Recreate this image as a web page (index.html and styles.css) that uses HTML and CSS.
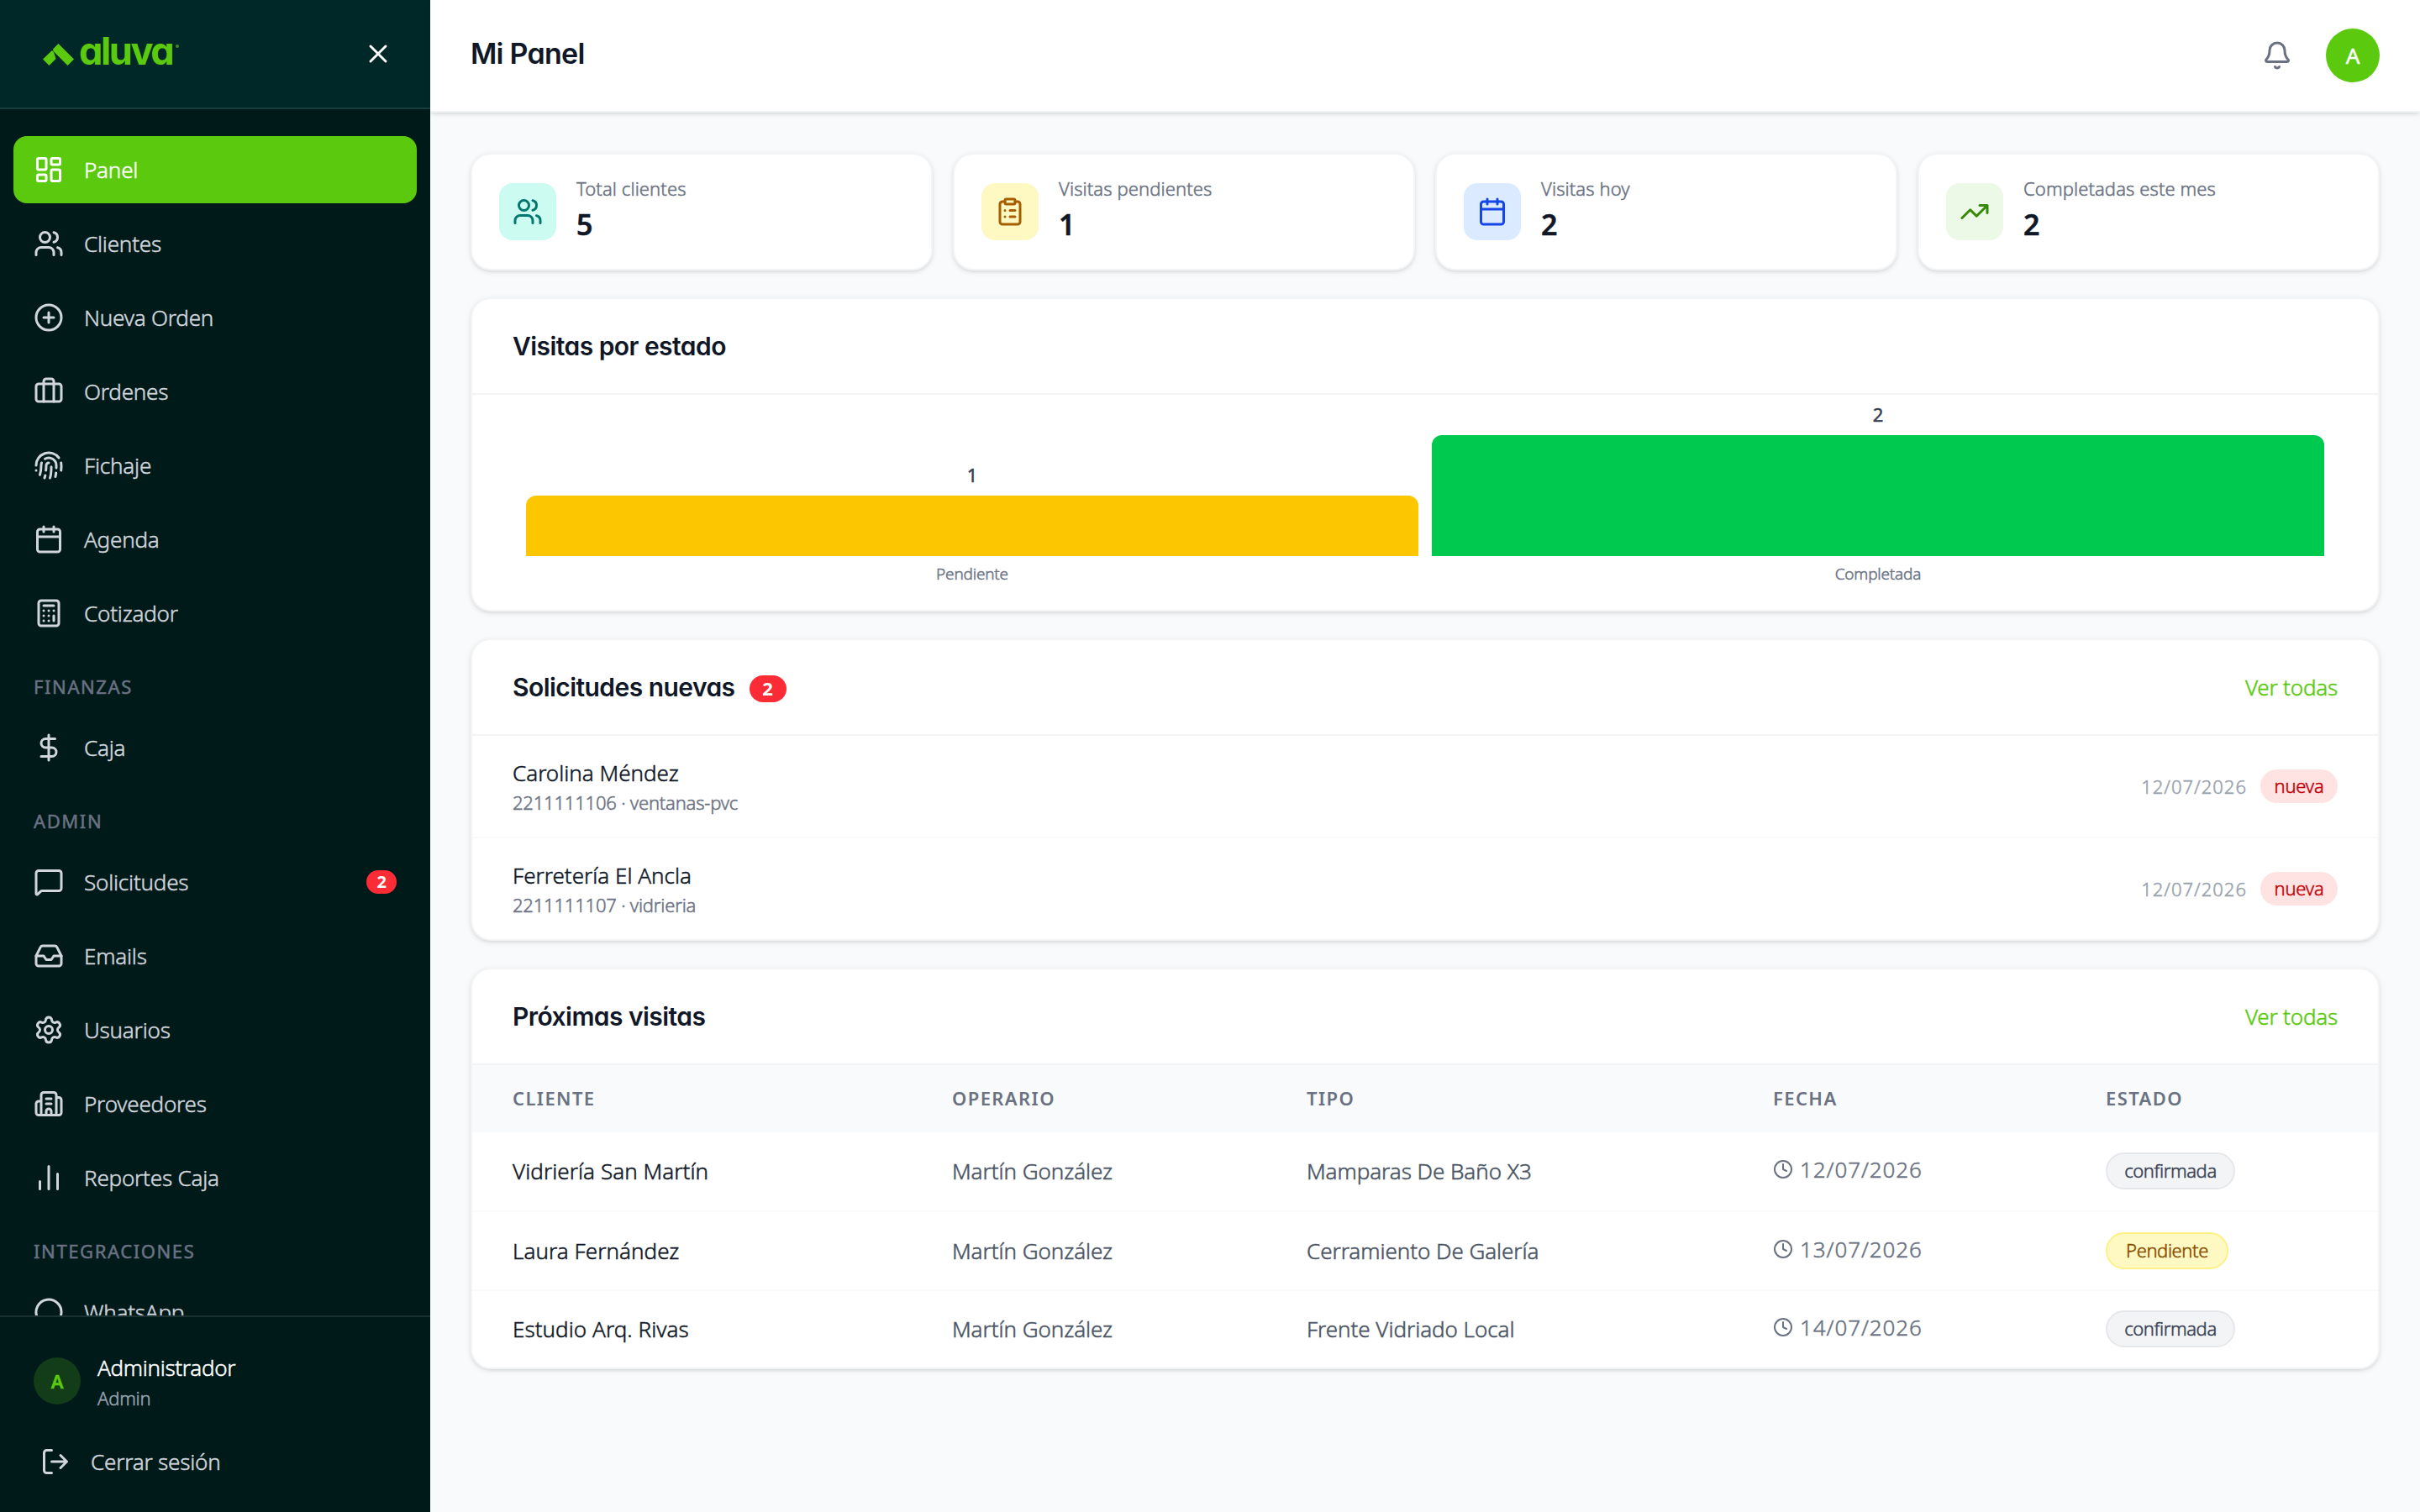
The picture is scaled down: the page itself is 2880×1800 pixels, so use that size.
FILE: index.html
```
<!DOCTYPE html>
<html lang="es">

<head>
  <meta charset="UTF-8">
  <title>Mi Panel</title>
  <link rel="stylesheet" href="styles.css">
</head>

<body>
  <div class="layout">
    <aside class="sidebar">
      <div class="sidebar-header">
        <div class="logo">
          <svg class="logo-mark" viewBox="0 0 37 26">
            <path d="M18.500 0 37 18.500 29.500 26 12.500 9 12 6.500Z" />
            <path d="M11 8 13 10 15.500 18 7.500 26 0 18.500Z" />
          </svg>
          <span class="logo-text">aluva</span>
          <span class="logo-dot"></span>
        </div>
        <svg class="icon" viewBox="0 0 24 24"><path d="M18 6 6 18M6 6l12 12" /></svg>
      </div>

      <nav class="nav">
        <a class="nav-item active">
          <svg class="icon" viewBox="0 0 24 24"><rect width="7" height="9" x="3" y="3" rx="1" /><rect width="7" height="5" x="14" y="3" rx="1" /><rect width="7" height="9" x="14" y="12" rx="1" /><rect width="7" height="5" x="3" y="16" rx="1" /></svg>
          <span>Panel</span>
        </a>
        <a class="nav-item">
          <svg class="icon" viewBox="0 0 24 24"><path d="M16 21v-2a4 4 0 0 0-4-4H6a4 4 0 0 0-4 4v2M16 3.128a4 4 0 0 1 0 7.744M22 21v-2a4 4 0 0 0-3-3.870" /><circle cx="9" cy="7" r="4" /></svg>
          <span>Clientes</span>
        </a>
        <a class="nav-item">
          <svg class="icon" viewBox="0 0 24 24"><circle cx="12" cy="12" r="10" /><path d="M8 12h8M12 8v8" /></svg>
          <span>Nueva Orden</span>
        </a>
        <a class="nav-item">
          <svg class="icon" viewBox="0 0 24 24"><path d="M16 20V4a2 2 0 0 0-2-2h-4a2 2 0 0 0-2 2v16" /><rect width="20" height="14" x="2" y="6" rx="2" /></svg>
          <span>Ordenes</span>
        </a>
        <a class="nav-item">
          <svg class="icon" viewBox="0 0 24 24"><path d="M12 10a2 2 0 0 0-2 2c0 1.020-.1 2.510-.26 4M14 13.120c0 2.380 0 6.380-1 8.880M17.290 21.020c.12-.6.43-2.300.5-3.020M2 12a10 10 0 0 1 18-6M2 16h.01M21.800 16c.2-2 .131-5.354 0-6M5 19.500C5.500 18 6 15 6 12a6 6 0 0 1 .34-2M8.650 22c.21-.66.45-1.320.57-2M9 6.800a6 6 0 0 1 9 5.200v2" /></svg>
          <span>Fichaje</span>
        </a>
        <a class="nav-item">
          <svg class="icon" viewBox="0 0 24 24"><path d="M8 2v4M16 2v4M3 10h18" /><rect width="18" height="18" x="3" y="4" rx="2" /></svg>
          <span>Agenda</span>
        </a>
        <a class="nav-item">
          <svg class="icon" viewBox="0 0 24 24"><rect width="16" height="20" x="4" y="2" rx="2" /><path d="M8 6h8M16 14v4M16 10h.01M12 10h.01M8 10h.01M12 14h.01M8 14h.01M12 18h.01M8 18h.01" /></svg>
          <span>Cotizador</span>
        </a>

        <div class="nav-title">FINANZAS</div>
        <a class="nav-item">
          <svg class="icon" viewBox="0 0 24 24"><path d="M12 2v20M17 5H9.500a3.500 3.500 0 0 0 0 7h5a3.500 3.500 0 0 1 0 7H6" /></svg>
          <span>Caja</span>
        </a>

        <div class="nav-title">ADMIN</div>
        <a class="nav-item">
          <svg class="icon" viewBox="0 0 24 24"><path d="M22 17a2 2 0 0 1-2 2H6.828a2 2 0 0 0-1.414.586l-2.202 2.202A.71.71 0 0 1 2 21.286V5a2 2 0 0 1 2-2h16a2 2 0 0 1 2 2z" /></svg>
          <span>Solicitudes</span>
          <b class="nav-badge">2</b>
        </a>
        <a class="nav-item">
          <svg class="icon" viewBox="0 0 24 24"><path d="M22 12h-6l-2 3h-4l-2-3H2" /><path d="M5.450 5.110 2 12v6a2 2 0 0 0 2 2h16a2 2 0 0 0 2-2v-6l-3.450-6.890A2 2 0 0 0 16.760 4H7.240a2 2 0 0 0-1.790 1.110z" /></svg>
          <span>Emails</span>
        </a>
        <a class="nav-item">
          <svg class="icon" viewBox="0 0 24 24"><path d="M9.671 4.136a2.340 2.340 0 0 1 4.659 0 2.340 2.340 0 0 0 3.319 1.915 2.340 2.340 0 0 1 2.330 4.033 2.340 2.340 0 0 0 0 3.831 2.340 2.340 0 0 1-2.330 4.033 2.340 2.340 0 0 0-3.319 1.915 2.340 2.340 0 0 1-4.659 0 2.340 2.340 0 0 0-3.320-1.915 2.340 2.340 0 0 1-2.330-4.033 2.340 2.340 0 0 0 0-3.831A2.340 2.340 0 0 1 6.350 6.051a2.340 2.340 0 0 0 3.319-1.915" /><circle cx="12" cy="12" r="3" /></svg>
          <span>Usuarios</span>
        </a>
        <a class="nav-item">
          <svg class="icon" viewBox="0 0 24 24"><path d="M10 12h4M10 8h4M14 21v-3a2 2 0 0 0-4 0v3M6 10H4a2 2 0 0 0-2 2v7a2 2 0 0 0 2 2h16a2 2 0 0 0 2-2V9a2 2 0 0 0-2-2h-2M6 21V5a2 2 0 0 1 2-2h8a2 2 0 0 1 2 2v16" /></svg>
          <span>Proveedores</span>
        </a>
        <a class="nav-item">
          <svg class="icon" viewBox="0 0 24 24"><path d="M5 21v-6M12 21V3M19 21V9" /></svg>
          <span>Reportes Caja</span>
        </a>

        <div class="nav-title">INTEGRACIONES</div>
        <a class="nav-item">
          <svg class="icon" viewBox="0 0 24 24"><path d="M2.992 16.342a2 2 0 0 1 .094 1.167l-1.065 3.290a1 1 0 0 0 1.236 1.168l3.413-.998a2 2 0 0 1 1.099.092 10 10 0 1 0-4.777-4.719" /></svg>
          <span>WhatsApp</span>
        </a>
      </nav>

      <div class="sidebar-footer">
        <div class="user">
          <div class="user-avatar">A</div>
          <div>
            <div class="user-name">Administrador</div>
            <div class="user-role">Admin</div>
          </div>
        </div>
        <a class="logout">
          <svg class="icon" viewBox="0 0 24 24"><path d="m16 17 5-5-5-5M21 12H9M9 21H5a2 2 0 0 1-2-2V5a2 2 0 0 1 2-2h4" /></svg>
          <span>Cerrar sesión</span>
        </a>
      </div>
    </aside>

    <div class="main">
      <header class="topbar">
        <h1>Mi Panel</h1>
        <div class="topbar-actions">
          <svg class="icon bell" viewBox="0 0 24 24"><path d="M10.268 21a2 2 0 0 0 3.464 0M3.262 15.326A1 1 0 0 0 4 17h16a1 1 0 0 0 .74-1.673C19.410 13.956 18 12.499 18 8A6 6 0 0 0 6 8c0 4.499-1.411 5.956-2.738 7.326" /></svg>
          <div class="avatar">A</div>
        </div>
      </header>

      <div class="content">
        <div class="stats">
          <div class="card stat">
            <div class="stat-icon teal">
              <svg class="icon" viewBox="0 0 24 24"><path d="M16 21v-2a4 4 0 0 0-4-4H6a4 4 0 0 0-4 4v2M16 3.128a4 4 0 0 1 0 7.744M22 21v-2a4 4 0 0 0-3-3.870" /><circle cx="9" cy="7" r="4" /></svg>
            </div>
            <div>
              <div class="stat-label">Total clientes</div>
              <div class="stat-value">5</div>
            </div>
          </div>
          <div class="card stat">
            <div class="stat-icon yellow">
              <svg class="icon" viewBox="0 0 24 24"><rect width="8" height="4" x="8" y="2" rx="1" /><path d="M16 4h2a2 2 0 0 1 2 2v14a2 2 0 0 1-2 2H6a2 2 0 0 1-2-2V6a2 2 0 0 1 2-2h2M12 11h4M12 16h4M8 11h.01M8 16h.01" /></svg>
            </div>
            <div>
              <div class="stat-label">Visitas pendientes</div>
              <div class="stat-value">1</div>
            </div>
          </div>
          <div class="card stat">
            <div class="stat-icon blue">
              <svg class="icon" viewBox="0 0 24 24"><path d="M8 2v4M16 2v4M3 10h18" /><rect width="18" height="18" x="3" y="4" rx="2" /></svg>
            </div>
            <div>
              <div class="stat-label">Visitas hoy</div>
              <div class="stat-value">2</div>
            </div>
          </div>
          <div class="card stat">
            <div class="stat-icon green">
              <svg class="icon" viewBox="0 0 24 24"><path d="M16 7h6v6M22 7l-8.500 8.500-5-5L2 17" /></svg>
            </div>
            <div>
              <div class="stat-label">Completadas este mes</div>
              <div class="stat-value">2</div>
            </div>
          </div>
        </div>

        <section class="card">
          <div class="card-header">
            <h2>Visitas por estado</h2>
          </div>
          <div class="chart">
            <div class="chart-col">
              <div class="chart-value">1</div>
              <div class="chart-bar pendiente" style="height: 72px"></div>
              <div class="chart-label">Pendiente</div>
            </div>
            <div class="chart-col">
              <div class="chart-value">2</div>
              <div class="chart-bar completada" style="height: 144px"></div>
              <div class="chart-label">Completada</div>
            </div>
          </div>
        </section>

        <section class="card">
          <div class="card-header">
            <h2>Solicitudes nuevas</h2>
            <b class="count">2</b>
            <a class="link">Ver todas</a>
          </div>
          <div class="request">
            <div>
              <div class="request-name">Carolina Méndez</div>
              <div class="request-info">2211111106 · ventanas-pvc</div>
            </div>
            <div class="request-meta">
              <span class="request-date">12/07/2026</span>
              <span class="tag-new">nueva</span>
            </div>
          </div>
          <div class="request">
            <div>
              <div class="request-name">Ferretería El Ancla</div>
              <div class="request-info">2211111107 · vidrieria</div>
            </div>
            <div class="request-meta">
              <span class="request-date">12/07/2026</span>
              <span class="tag-new">nueva</span>
            </div>
          </div>
        </section>

        <section class="card">
          <div class="card-header">
            <h2>Próximas visitas</h2>
            <a class="link">Ver todas</a>
          </div>
          <table class="visits">
            <colgroup>
              <col class="col-cliente">
              <col class="col-operario">
              <col class="col-tipo">
              <col class="col-fecha">
              <col>
            </colgroup>
            <thead>
              <tr>
                <th>CLIENTE</th>
                <th>OPERARIO</th>
                <th>TIPO</th>
                <th>FECHA</th>
                <th>ESTADO</th>
              </tr>
            </thead>
            <tbody>
              <tr>
                <td class="client">Vidriería San Martín</td>
                <td>Martín González</td>
                <td>Mamparas De Baño X3</td>
                <td><div class="date"><svg class="icon" viewBox="0 0 24 24"><circle cx="12" cy="12" r="10" /><path d="M12 6v6l4 2" /></svg>12/07/2026</div></td>
                <td><span class="status">confirmada</span></td>
              </tr>
              <tr>
                <td class="client">Laura Fernández</td>
                <td>Martín González</td>
                <td>Cerramiento De Galería</td>
                <td><div class="date"><svg class="icon" viewBox="0 0 24 24"><circle cx="12" cy="12" r="10" /><path d="M12 6v6l4 2" /></svg>13/07/2026</div></td>
                <td><span class="status status-pending">Pendiente</span></td>
              </tr>
              <tr>
                <td class="client">Estudio Arq. Rivas</td>
                <td>Martín González</td>
                <td>Frente Vidriado Local</td>
                <td><div class="date"><svg class="icon" viewBox="0 0 24 24"><circle cx="12" cy="12" r="10" /><path d="M12 6v6l4 2" /></svg>14/07/2026</div></td>
                <td><span class="status">confirmada</span></td>
              </tr>
            </tbody>
          </table>
        </section>
      </div>
    </div>
  </div>
</body>

</html>
```
FILE: styles.css
```
* {
  margin: 0;
  padding: 0;
  box-sizing: border-box;
}

body {
  font-family: 'Noto Sans', 'Open Sans', sans-serif;
  font-size: 26px;
  font-weight: 300;
  letter-spacing: -0.2px;
  -webkit-text-stroke: 0.5px;
  background: #f9fafb;
  color: #101828;
}

h1,
h2 {
  font-family: Inter, sans-serif;
  font-feature-settings: "cv11";
  font-weight: 600;
}

h1 {
  font-size: 34px;
  letter-spacing: -0.75px;
  padding-bottom: 5px;
}

h2 {
  font-size: 30px;
  letter-spacing: -0.55px;
  padding-bottom: 1px;
}

b {
  font-weight: 700;
}

h1,
h2,
b,
th {
  -webkit-text-stroke: 0;
}

.icon {
  width: 36px;
  height: 36px;
  flex-shrink: 0;
  fill: none;
  stroke: currentColor;
  stroke-width: 2;
  stroke-linecap: round;
  stroke-linejoin: round;
}

.layout {
  display: flex;
  height: 1800px;
  overflow: hidden;
}

/* Sidebar */
.sidebar {
  width: 512px;
  flex-shrink: 0;
  display: flex;
  flex-direction: column;
  background: #001a1a;
  color: #d1d5dc;
}

.sidebar-header {
  display: flex;
  align-items: center;
  justify-content: space-between;
  height: 130px;
  padding: 0 44px 0 51px;
  background: #002828;
  border-bottom: 2px solid #1a3d3d;
  color: #fff;
}

.logo {
  display: flex;
  align-items: flex-end;
  height: 34px;
  margin-bottom: 6px;
  -webkit-text-stroke: 0;
}

.logo-mark {
  width: 37px;
  height: 26px;
  fill: #5bca0f;
}

.logo-text {
  margin-left: 6px;
  font-family: Inter, sans-serif;
  font-feature-settings: "cv11";
  font-size: 45px;
  font-weight: 700;
  line-height: 34px;
  letter-spacing: -2.4px;
  color: #5bca0f;
}

.logo-dot {
  width: 4px;
  height: 4px;
  margin-left: 4px;
  align-self: flex-start;
  margin-top: 9px;
  border-radius: 50%;
  background: #3c8a1a;
}

.nav {
  flex: 1;
  min-height: 0;
  overflow: hidden;
  padding: 32px 16px 0;
}

.nav-item {
  display: flex;
  align-items: center;
  gap: 24px;
  height: 80px;
  margin-bottom: 8px;
  padding: 0 24px;
  border-radius: 16px;
}

.nav-item.active {
  background: #5bca0f;
  color: #fff;
}

.nav-title {
  height: 72px;
  padding: 24px 24px 0;
  font-size: 22px;
  font-weight: 400;
  line-height: 30px;
  letter-spacing: 1.6px;
  color: #6a7282;
}

.nav-badge {
  width: 36px;
  height: 28px;
  margin-left: auto;
  border-radius: 14px;
  background: #fb2c36;
  color: #fff;
  font-size: 20px;
  line-height: 28px;
  text-align: center;
}

.sidebar-footer {
  height: 234px;
  padding: 40px 40px 0;
  border-top: 2px solid #1a3131;
}

.user {
  display: flex;
  align-items: center;
  gap: 20px;
}

.user-avatar {
  width: 56px;
  height: 56px;
  border-radius: 50%;
  background: #123d18;
  color: #5bca0f;
  font-size: 22px;
  font-weight: 600;
  line-height: 56px;
  text-align: center;
}

.user-name {
  line-height: 40px;
  letter-spacing: -0.3px;
  color: #fff;
}

.user-role {
  font-size: 22px;
  line-height: 32px;
  color: #99a1af;
}

.logout {
  display: flex;
  align-items: center;
  gap: 24px;
  height: 80px;
  margin-top: 20px;
  padding-left: 8px;
}

/* Main */
.main {
  flex: 1;
  min-width: 0;
}

.topbar {
  display: flex;
  align-items: center;
  justify-content: space-between;
  height: 134px;
  padding: 0 48px;
  background: #fff;
  border-bottom: 2px solid #f3f4f6;
  box-shadow: 0 2px 6px rgba(0, 0, 0, 0.1), 0 2px 4px -2px rgba(0, 0, 0, 0.1);
}

.topbar-actions {
  display: flex;
  align-items: center;
  gap: 40px;
}

.bell {
  color: #6a7282;
}

.avatar {
  width: 64px;
  height: 64px;
  border-radius: 50%;
  background: #5bca0f;
  color: #fff;
  font-weight: 400;
  line-height: 64px;
  text-align: center;
}

.content {
  display: flex;
  flex-direction: column;
  gap: 32px;
  padding: 48px;
}

.card {
  background: #fff;
  border: 2px solid #f3f4f6;
  border-radius: 24px;
  overflow: hidden;
  box-shadow: 0 2px 6px rgba(0, 0, 0, 0.1), 0 2px 4px -2px rgba(0, 0, 0, 0.1);
}

.card-header {
  display: flex;
  align-items: center;
  height: 114px;
  padding: 0 48px;
  border-bottom: 2px solid #f3f4f6;
}

.link {
  margin-left: auto;
  color: #5bca0f;
}

.stats {
  display: grid;
  grid-template-columns: repeat(4, 1fr);
  gap: 24px;
}

.stat {
  display: flex;
  align-items: center;
  gap: 24px;
  height: 140px;
  padding: 0 32px;
}

.stat-icon {
  display: flex;
  align-items: center;
  justify-content: center;
  width: 68px;
  height: 68px;
  border-radius: 16px;
}

.teal {
  background: #cbfbf1;
  color: #00786f;
}

.yellow {
  background: #fef9c2;
  color: #a65f00;
}

.blue {
  background: #dbeafe;
  color: #1447e6;
}

.green {
  background: #edf9e7;
  color: #378a09;
}

.stat-label {
  font-size: 22px;
  line-height: 32px;
  letter-spacing: 0.1px;
  color: #6a7282;
}

.stat-value {
  padding-bottom: 2px;
  font-size: 34px;
  font-weight: 600;
  line-height: 54px;
}

/* Chart */
.chart {
  display: flex;
  align-items: flex-end;
  gap: 16px;
  height: 256px;
  padding: 0 64px 28px;
}

.chart-col {
  flex: 1;
  text-align: center;
}

.chart-value {
  margin-bottom: 9px;
  font-size: 22px;
  font-weight: 400;
  line-height: 32px;
  color: #364153;
}

.chart-bar {
  border-radius: 12px 12px 0 0;
}

.pendiente {
  background: #fdc700;
}

.completada {
  background: #00c950;
}

.chart-label {
  margin-top: 6px;
  font-size: 19px;
  line-height: 30px;
  color: #6a7282;
}

/* Requests */
.count {
  width: 44px;
  height: 32px;
  margin: 4px 0 0 17px;
  border-radius: 16px;
  background: #fb2c36;
  color: #fff;
  font-size: 22px;
  line-height: 31px;
  text-align: center;
}

.request {
  display: flex;
  align-items: center;
  justify-content: space-between;
  height: 120px;
  padding: 0 48px;
}

.request + .request {
  height: 122px;
  border-top: 2px solid #f9fafb;
}

.request-name {
  line-height: 40px;
  letter-spacing: 0;
}

.request-info {
  font-size: 22px;
  line-height: 30px;
  padding-bottom: 2px;
  letter-spacing: -0.2px;
  color: #6a7282;
}

.request-meta {
  display: flex;
  align-items: center;
  gap: 16px;
  font-size: 22px;
}

.request-date {
  padding-bottom: 1px;
  letter-spacing: 1px;
  color: #99a1af;
}

.tag-new {
  width: 92px;
  height: 40px;
  border-radius: 20px;
  background: #ffe2e2;
  color: #c10007;
  line-height: 39px;
  letter-spacing: -0.2px;
  text-align: center;
}

/* Visits table */
.visits {
  width: 100%;
  table-layout: fixed;
  border-collapse: collapse;
}

.col-cliente {
  width: 523px;
}

.col-operario {
  width: 422px;
}

.col-tipo {
  width: 555px;
}

.col-fecha {
  width: 396px;
}

.visits th {
  height: 80px;
  padding: 0 0 2px 48px;
  background: #f9fafb;
  color: #6a7282;
  font-size: 22px;
  font-weight: 600;
  letter-spacing: 1.4px;
  text-align: left;
}

.visits td {
  height: 94px;
  padding: 0 0 1px 48px;
  border-bottom: 2px solid #f9fafb;
  color: #4a5565;
  letter-spacing: -0.05px;
}

.visits tr:last-child td {
  height: 92px;
  border-bottom: none;
}

.visits td.client {
  color: #101828;
  letter-spacing: 0.05px;
}

.date {
  display: flex;
  align-items: center;
  gap: 8px;
  padding-bottom: 4px;
  color: #6a7282;
  letter-spacing: 0.9px;
}

.date .icon {
  width: 24px;
  height: 24px;
}

.status {
  display: block;
  width: 154px;
  height: 44px;
  border: 2px solid #e5e7eb;
  border-radius: 22px;
  background: #f3f4f6;
  color: #364153;
  font-size: 22px;
  line-height: 39px;
  letter-spacing: -0.4px;
  text-align: center;
}

.status-pending {
  width: 146px;
  border-color: #fff085;
  background: #fef9c2;
  color: #894b00;
}
```
